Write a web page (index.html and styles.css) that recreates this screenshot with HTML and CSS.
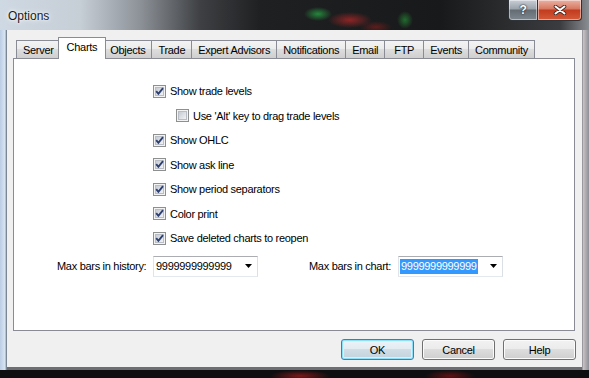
FILE: index.html
```html
<!DOCTYPE html>
<html lang="en">
<head>
  <meta charset="UTF-8" />
  <title>Options</title>
  <link rel="stylesheet" href="styles.css">
</head>
<body>
  <svg class="defs" width="0" height="0">
    <defs>
      <linearGradient id="boxfill" x1="0" y1="0" x2="1" y2="1">
        <stop offset="0" stop-color="#c4c9d1"/>
        <stop offset="1" stop-color="#f4f5f6"/>
      </linearGradient>
    </defs>
  </svg>

  <div class="window">
    <div class="titlebar">
      <span class="title">Options</span>
      <div class="caption">
        <span class="cap help">?</span>
        <span class="cap close">
          <svg width="14" height="10" viewBox="0 0 14 10">
            <path d="M2.5 1.5l9 7M11.5 1.5l-9 7" stroke="#3a2a26" stroke-width="3.6" stroke-linecap="round"/>
            <path d="M2.5 1.5l9 7M11.5 1.5l-9 7" stroke="#fff" stroke-width="2" stroke-linecap="round"/>
          </svg>
        </span>
      </div>
    </div>

    <div class="frame">
      <div class="client">
        <div class="tabs">
          <span class="tab">Server</span>
          <span class="tab active">Charts</span>
          <span class="tab">Objects</span>
          <span class="tab">Trade</span>
          <span class="tab">Expert Advisors</span>
          <span class="tab">Notifications</span>
          <span class="tab">Email</span>
          <span class="tab">FTP</span>
          <span class="tab">Events</span>
          <span class="tab">Community</span>
        </div>

        <div class="panel">
          <div class="checks">
            <div class="check">
              <svg class="box" width="13" height="13" viewBox="0 0 13 13"><rect x=".5" y=".5" width="12" height="12" fill="#f3f3f3" stroke="#8e8f8f"/><rect x="2.5" y="2.5" width="8" height="8" fill="url(#boxfill)" stroke="#b9bec6"/><path d="M3.2 6.2l2.2 2.6 4.6-5.6" fill="none" stroke="#2c3f72" stroke-width="1.9"/></svg>
              Show trade levels
            </div>
            <div class="check sub">
              <svg class="box" width="13" height="13" viewBox="0 0 13 13"><rect x=".5" y=".5" width="12" height="12" fill="#f3f3f3" stroke="#8e8f8f"/><rect x="2.5" y="2.5" width="8" height="8" fill="url(#boxfill)" stroke="#b9bec6"/></svg>
              Use 'Alt' key to drag trade levels
            </div>
            <div class="check">
              <svg class="box" width="13" height="13" viewBox="0 0 13 13"><rect x=".5" y=".5" width="12" height="12" fill="#f3f3f3" stroke="#8e8f8f"/><rect x="2.5" y="2.5" width="8" height="8" fill="url(#boxfill)" stroke="#b9bec6"/><path d="M3.2 6.2l2.2 2.6 4.6-5.6" fill="none" stroke="#2c3f72" stroke-width="1.9"/></svg>
              Show OHLC
            </div>
            <div class="check">
              <svg class="box" width="13" height="13" viewBox="0 0 13 13"><rect x=".5" y=".5" width="12" height="12" fill="#f3f3f3" stroke="#8e8f8f"/><rect x="2.5" y="2.5" width="8" height="8" fill="url(#boxfill)" stroke="#b9bec6"/><path d="M3.2 6.2l2.2 2.6 4.6-5.6" fill="none" stroke="#2c3f72" stroke-width="1.9"/></svg>
              Show ask line
            </div>
            <div class="check">
              <svg class="box" width="13" height="13" viewBox="0 0 13 13"><rect x=".5" y=".5" width="12" height="12" fill="#f3f3f3" stroke="#8e8f8f"/><rect x="2.5" y="2.5" width="8" height="8" fill="url(#boxfill)" stroke="#b9bec6"/><path d="M3.2 6.2l2.2 2.6 4.6-5.6" fill="none" stroke="#2c3f72" stroke-width="1.9"/></svg>
              Show period separators
            </div>
            <div class="check">
              <svg class="box" width="13" height="13" viewBox="0 0 13 13"><rect x=".5" y=".5" width="12" height="12" fill="#f3f3f3" stroke="#8e8f8f"/><rect x="2.5" y="2.5" width="8" height="8" fill="url(#boxfill)" stroke="#b9bec6"/><path d="M3.2 6.2l2.2 2.6 4.6-5.6" fill="none" stroke="#2c3f72" stroke-width="1.9"/></svg>
              Color print
            </div>
            <div class="check">
              <svg class="box" width="13" height="13" viewBox="0 0 13 13"><rect x=".5" y=".5" width="12" height="12" fill="#f3f3f3" stroke="#8e8f8f"/><rect x="2.5" y="2.5" width="8" height="8" fill="url(#boxfill)" stroke="#b9bec6"/><path d="M3.2 6.2l2.2 2.6 4.6-5.6" fill="none" stroke="#2c3f72" stroke-width="1.9"/></svg>
              Save deleted charts to reopen
            </div>
          </div>

          <div class="bars">
            <span class="lbl">Max bars in history:</span>
            <div class="combo">
              <span class="val">9999999999999</span>
              <svg class="arrow" width="7" height="4" viewBox="0 0 7 4"><path d="M0 0h7L3.5 4z" fill="#000"/></svg>
            </div>
            <span class="lbl second">Max bars in chart:</span>
            <div class="combo">
              <span class="val sel">9999999999999</span>
              <svg class="arrow" width="7" height="4" viewBox="0 0 7 4"><path d="M0 0h7L3.5 4z" fill="#000"/></svg>
            </div>
          </div>
        </div>

        <div class="buttons">
          <button class="btn default">OK</button>
          <button class="btn">Cancel</button>
          <button class="btn">Help</button>
        </div>
      </div>
    </div>
  </div>
</body>
</html>
```

FILE: styles.css
```css
body {
  margin: 0;
  width: 589px;
  height: 378px;
  overflow: hidden;
  font-family: "Liberation Sans", Arial, sans-serif;
  font-size: 11px;
  letter-spacing: -0.3px;
  color: #000;
  background:
    radial-gradient(ellipse 30px 6px at 300px 376px, rgba(170, 30, 30, 0.7), transparent),
    radial-gradient(ellipse 25px 6px at 450px 376px, rgba(150, 20, 20, 0.6), transparent),
    #0e0e10;
}
.defs {
  position: absolute;
}
.window {
  display: flex;
  flex-direction: column;
  height: 370px;
}
.titlebar {
  height: 30px;
  display: flex;
  justify-content: space-between;
  background:
    radial-gradient(ellipse 14px 7px at 318px 14px, rgba(40, 170, 70, 0.75), transparent),
    radial-gradient(ellipse 22px 8px at 350px 20px, rgba(190, 40, 40, 0.7), transparent),
    radial-gradient(ellipse 8px 9px at 405px 20px, rgba(40, 160, 60, 0.6), transparent),
    radial-gradient(ellipse 16px 6px at 376px 27px, rgba(160, 30, 30, 0.5), transparent),
    linear-gradient(90deg, #cfd9e3 0, #c6ced6 80px, #8d9298 140px, #3e4043 200px, #1f2022 260px, #18191a 440px, #3a3c3f 560px, #8a8d92 589px);
}
.title {
  padding: 9px 0 0 8px;
  font-size: 12px;
  letter-spacing: 0;
  color: #1b1b1b;
  text-shadow: 0 0 6px #fff, 0 0 3px #fff;
}
.caption {
  display: flex;
  margin-right: 7px;
  height: 21px;
}
.cap {
  display: flex;
  align-items: center;
  justify-content: center;
  box-sizing: border-box;
  height: 21px;
  border: 1px solid #2f3236;
  border-top: none;
  box-shadow: inset 0 0 0 1px rgba(255, 255, 255, 0.45);
}
.help {
  width: 29px;
  border-radius: 0 0 0 4px;
  border-right: none;
  font-weight: bold;
  font-size: 12px;
  color: #fff;
  text-shadow: 0 0 2px #222, 0 0 1px #222;
  background: linear-gradient(#c9cfd6 0, #9aa2aa 45%, #646b73 50%, #7e878f 100%);
}
.close {
  width: 45px;
  border-radius: 0 0 4px 0;
  background: linear-gradient(#eab1a4 0, #d7775f 45%, #c23b1f 50%, #d45a38 100%);
}
.frame {
  flex: 1;
  display: flex;
  padding: 0 7px 3px 7px;
  background: linear-gradient(90deg, #b9cde4 0, #d9e6f3 5px, #8aa0b8 6px, #6c6e72 7px, #6c6e72 582px, #c9c3c6 583px, #8d9097 589px);
}
.client {
  flex: 1;
  display: flex;
  flex-direction: column;
  padding: 7px 7px 7px 6px;
  background: #f0f0f0;
}
.tabs {
  display: flex;
  align-items: flex-end;
  height: 21px;
  padding-left: 4px;
  position: relative;
  z-index: 1;
}
.tab {
  box-sizing: border-box;
  height: 18px;
  min-width: 40px;
  padding: 3px 6px 0;
  margin-left: -1px;
  text-align: center;
  border: 1px solid #898c95;
  border-bottom: none;
  background: linear-gradient(#f3f3f3 0, #ebebeb 50%, #dddddd 50%, #cfcfcf 100%);
  white-space: nowrap;
}
.tab.active {
  height: 22px;
  margin: 0 -2px -1px -3px;
  padding: 3px 8px 0;
  background: #fff;
  position: relative;
}
.panel {
  height: 273px;
  box-sizing: border-box;
  border: 1px solid #898c95;
  background: #fff;
  display: flex;
  flex-direction: column;
}
.checks {
  display: flex;
  flex-direction: column;
  padding: 20px 0 0 139px;
}
.check {
  display: flex;
  align-items: center;
  gap: 4px;
  height: 24.5px;
}
.check.sub {
  padding-left: 23px;
}
.box {
  flex: none;
}
.bars {
  display: flex;
  align-items: center;
  margin-top: 5px;
  padding-left: 43px;
}
.lbl {
  width: 96px;
}
.lbl.second {
  width: 89px;
  margin-left: 51px;
}
.combo {
  box-sizing: border-box;
  width: 105px;
  height: 21px;
  display: flex;
  align-items: center;
  justify-content: space-between;
  padding: 0 5px 0 1px;
  border: 1px solid #abadb3;
  border-color: #abadb3 #dbdfe6 #e3e9ef #e2e3ea;
  background: #fff;
}
.val {
  padding: 1px 1px;
  line-height: 13px;
}
.val.sel {
  background: #3399ff;
  color: #fff;
}
.buttons {
  display: flex;
  justify-content: flex-end;
  gap: 8px;
  margin: 8px -1px 0 0;
}
.btn {
  width: 73px;
  height: 21px;
  font-family: "Liberation Sans", Arial, sans-serif;
  font-size: 11px;
  letter-spacing: -0.3px;
  color: #000;
  border: 1px solid #707070;
  border-radius: 3px;
  background: linear-gradient(#f2f2f2 0, #ebebeb 50%, #dddddd 50%, #cfcfcf 100%);
  box-shadow: inset 0 0 0 1px #fbfbfb;
  padding: 0;
}
.btn.default {
  border-color: #3c7fb1;
  box-shadow: inset 0 0 0 1px #8ee0f8, inset 0 0 0 2px #d4f1fc;
  background: linear-gradient(#edf4f8 0, #e2ebf1 50%, #d0dde6 50%, #c3d2dd 100%);
}
```
